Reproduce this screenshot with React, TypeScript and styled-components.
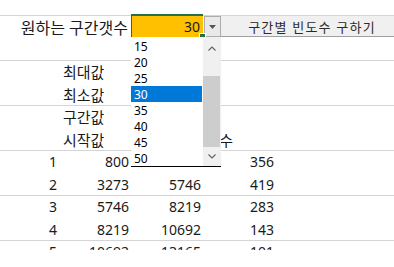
import React from 'react';
import styled, { createGlobalStyle } from 'styled-components';

const GlobalStyle = createGlobalStyle`
  html, body {
    margin: 0;
    padding: 0;
    background: #ffffff;
    overflow: hidden;
  }
  body {
    font-family: "Noto Sans", "Noto Sans CJK KR", sans-serif;
    color: #1a1a1a;
  }
`;

const Sheet = styled.div`
  position: relative;
  width: 394px;
  height: 250px;
  padding-top: 15px;
  box-sizing: border-box;
  overflow: hidden;
`;

const Row = styled.div<{ $h: number; $line: boolean }>`
  display: grid;
  grid-template-columns: 60px 71px 72px 43px 148px;
  height: ${(p) => p.$h}px;
  box-sizing: border-box;
  border-top: 1px solid ${(p) => (p.$line ? '#d4d4d4' : 'transparent')};
  font-size: 14px;
`;

const Cell = styled.div<{ $align?: 'left' | 'right'; $pad?: number; $ko?: boolean }>`
  display: flex;
  align-items: center;
  justify-content: ${(p) => (p.$align === 'left' ? 'flex-start' : 'flex-end')};
  padding: ${(p) =>
    p.$align === 'left' ? `0 0 0 ${p.$pad ?? 3}px` : `0 ${p.$pad ?? 2}px 0 0`};
  font-size: ${(p) => (p.$ko ? 15 : 14)}px;
  white-space: nowrap;
  overflow: hidden;
`;

const TitleLabel = styled(Cell)`
  grid-column: 1 / 3;
  font-size: 16px;
`;

const InputCell = styled.div`
  position: relative;
  margin-top: -2px;
  height: 23px;
  box-sizing: border-box;
  background: #ffc000;
  border-top: 2px solid #217346;
  border-left: 1px solid #217346;
  display: flex;
  align-items: center;
  justify-content: flex-end;
  padding-right: 3px;

  &::after {
    content: '';
    position: absolute;
    right: -3px;
    bottom: -3px;
    width: 5px;
    height: 5px;
    background: #217346;
    border: 1px solid #ffffff;
  }
`;

const Controls = styled.div`
  grid-column: 4 / 6;
  display: flex;
  align-items: stretch;
  min-width: 0;
`;

const ArrowBox = styled.div`
  flex: none;
  width: 17px;
  margin-left: 1px;
  box-sizing: border-box;
  border: 1px solid #adadad;
  background: #e9e9e9;
  display: flex;
  align-items: center;
  justify-content: center;
`;

const ActionButton = styled.div`
  flex: none;
  width: 182px;
  box-sizing: border-box;
  background: #f0f0f0;
  border-bottom: 1px solid #a0a0a0;
  display: flex;
  align-items: center;
  justify-content: center;
  font-size: 13px;
  letter-spacing: 1.2px;
  color: #2a2a2a;
`;

const ListPopup = styled.div`
  position: absolute;
  top: 37px;
  left: 131px;
  width: 90px;
  box-sizing: border-box;
  background: #ffffff;
  border-bottom: 1px solid #000000;
  display: flex;
`;

const Options = styled.div`
  width: 71px;
  padding-top: 1px;
`;

const Option = styled.div<{ $active?: boolean }>`
  height: 16px;
  line-height: 17px;
  padding-left: 3px;
  font-size: 12px;
  background: ${(p) => (p.$active ? '#0078d7' : 'transparent')};
  color: ${(p) => (p.$active ? '#ffffff' : '#000000')};
`;

const ScrollBar = styled.div`
  width: 18px;
  margin-left: 1px;
  background: #f0f0f0;
  display: flex;
  flex-direction: column;
  align-items: stretch;
`;

const ScrollArrow = styled.div<{ $h: number }>`
  height: ${(p) => p.$h}px;
  display: flex;
  align-items: center;
  justify-content: center;
`;

const Track = styled.div`
  flex: 1;
  display: flex;
  flex-direction: column;
  padding: 17px 1px 0 0;
`;

const Thumb = styled.div`
  flex: 1;
  background: #cdcdcd;
`;

const Chevron = ({ up }: { up?: boolean }) => (
  <svg width="8" height="5" viewBox="0 0 8 5">
    <polyline
      points={up ? '0.5,4.5 4,1 7.5,4.5' : '0.5,0.5 4,4 7.5,0.5'}
      fill="none"
      stroke="#606060"
      strokeWidth="1.1"
    />
  </svg>
);

type SheetRow = [string, string, string, string, string];

const rows: SheetRow[] = [
  ['', '', '', '', ''],
  ['', '최대값', '', '', ''],
  ['', '최소값', '', '', ''],
  ['', '구간값', '', '', ''],
  ['', '시작값', '', '빈도수', ''],
  ['1', '800', '', '', '356'],
  ['2', '3273', '5746', '', '419'],
  ['3', '5746', '8219', '', '283'],
  ['4', '8219', '10692', '', '143'],
  ['5', '10692', '13165', '', '101'],
];

const options = ['15', '20', '25', '30', '35', '40', '45', '50'];

const App = () => {
  return (
    <>
      <GlobalStyle />
      <Sheet>
        <Row $h={22} $line>
          <TitleLabel $pad={3}>원하는 구간갯수</TitleLabel>
          <InputCell>30</InputCell>
          <Controls>
            <ArrowBox>
              <svg width="7" height="4" viewBox="0 0 7 4">
                <polygon points="0,0 7,0 3.5,4" fill="#555555" />
              </svg>
            </ArrowBox>
            <ActionButton>구간별 빈도수 구하기</ActionButton>
          </Controls>
        </Row>
        {rows.map((r, i) => {
          const isText = r[1] !== '' && !/\d/.test(r[1]);
          return (
            <Row key={i} $h={i % 2 === 0 ? 23 : 22} $line={i % 2 === 1}>
              <Cell $pad={3}>{r[0]}</Cell>
              <Cell $align={isText ? 'left' : 'right'} $ko={isText}>
                {r[1]}
              </Cell>
              <Cell>{r[2]}</Cell>
              <Cell $pad={13} $ko>
                {r[3]}
              </Cell>
              <Cell $align="left" $pad={4}>
                {r[4]}
              </Cell>
            </Row>
          );
        })}
        <ListPopup>
          <Options>
            {options.map((o) => (
              <Option key={o} $active={o === '30'}>
                {o}
              </Option>
            ))}
          </Options>
          <ScrollBar>
            <ScrollArrow $h={22}>
              <Chevron up />
            </ScrollArrow>
            <Track>
              <Thumb />
            </Track>
            <ScrollArrow $h={19}>
              <Chevron />
            </ScrollArrow>
          </ScrollBar>
        </ListPopup>
      </Sheet>
    </>
  );
};

export default App;
